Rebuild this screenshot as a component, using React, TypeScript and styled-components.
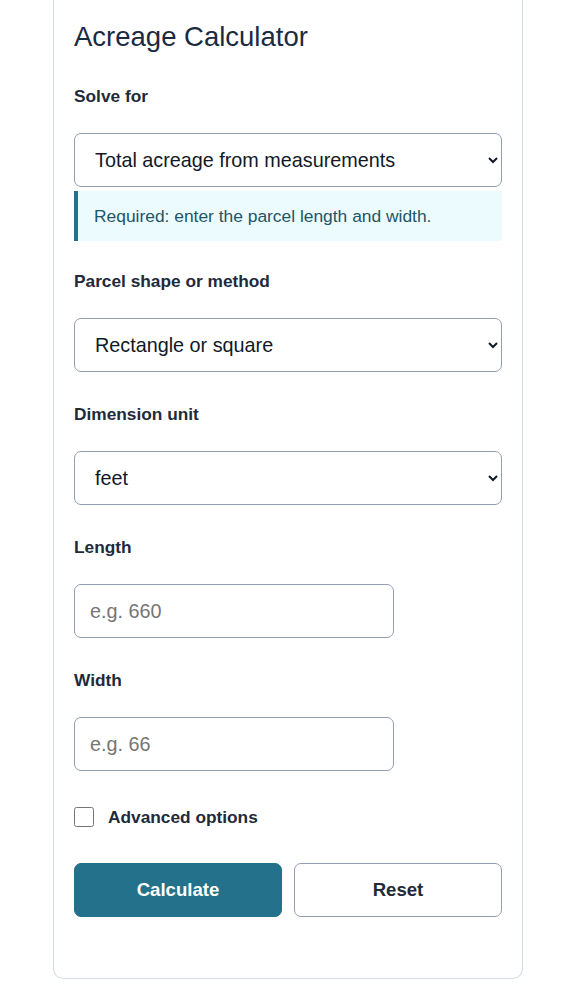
import React, { useState } from "react"
import styled, { createGlobalStyle } from "styled-components"

const GlobalStyle = createGlobalStyle`
    html, body {
        margin: 0;
        padding: 0;
        background: #ffffff;
    }
    body {
        font-family: "Liberation Sans", Arial, sans-serif;
        color: #1e293b;
    }
    * {
        box-sizing: border-box;
    }
`

const Page = styled.div`
    display: flex;
    justify-content: center;
    padding-right: 6px;
`

const Card = styled.form`
    width: 470px;
    border: 1px solid #d5dce5;
    border-top: none;
    border-radius: 0 0 10px 10px;
    padding: 20px 20px 20px;
    background: #ffffff;
`

const Title = styled.h1`
    margin: 0 0 30px;
    font-size: 27.5px;
    font-weight: 400;
    line-height: 1.2;
    color: #1b2a41;
`

const Field = styled.div<{ $gap?: number }>`
    display: flex;
    flex-direction: column;
    margin-bottom: ${({ $gap }) => ($gap ?? 29)}px;
`

const Label = styled.label`
    font-size: 17.3px;
    font-weight: 700;
    line-height: 26px;
    color: #1f2a3a;
    margin-bottom: 24px;
`

const Select = styled.select`
    width: 100%;
    height: 54px;
    padding: 0 12px 0 16px;
    font-family: inherit;
    font-size: 19.8px;
    color: #111827;
    background: #ffffff;
    border: 1px solid #919eb1;
    border-radius: 7px;
`

const TextInput = styled.input`
    width: 320px;
    height: 54px;
    padding: 0 15px;
    font-family: inherit;
    font-size: 19.8px;
    color: #111827;
    background: #ffffff;
    border: 1px solid #919eb1;
    border-radius: 7px;

    &::placeholder {
        color: #757575;
    }
`

const Hint = styled.div`
    margin-top: 4px;
    padding: 12px 16px;
    background: #ecfbfe;
    border-left: 4px solid #24718b;
    font-size: 17.4px;
    line-height: 26px;
    color: #1f5567;
`

/* top margin collapses with the last field's bottom margin */
const CheckRow = styled.label`
    display: flex;
    align-items: center;
    gap: 14px;
    margin: 33px 0 33px;
    font-size: 17.3px;
    font-weight: 700;
    line-height: 26px;
    color: #1f2a3a;
`

const Checkbox = styled.input`
    width: 20px;
    height: 20px;
    margin: 0;
`

const ButtonRow = styled.div`
    display: grid;
    grid-template-columns: 1fr 1fr;
    gap: 12px;
`

const Button = styled.button<{ $primary?: boolean }>`
    height: 54px;
    border-radius: 7px;
    font-family: inherit;
    font-size: 18.6px;
    font-weight: 700;
    cursor: pointer;
    background: ${({ $primary }) => ($primary ? "#24718b" : "#ffffff")};
    color: ${({ $primary }) => ($primary ? "#ffffff" : "#1f2a3a")};
    border: 1px solid ${({ $primary }) => ($primary ? "#24718b" : "#919eb1")};
`

const Result = styled.div`
    height: 41px;
`

export default function App() {
    const [advanced, setAdvanced] = useState(false)

    return (
        <Page>
            <GlobalStyle />
            <Card onSubmit={(e) => e.preventDefault()}>
                <Title>Acreage Calculator</Title>

                <Field $gap={27}>
                    <Label htmlFor="solve">Solve for</Label>
                    <Select id="solve" defaultValue="total">
                        <option value="total">Total acreage from measurements</option>
                        <option value="length">Missing length from acreage</option>
                    </Select>
                    <Hint>Required: enter the parcel length and width.</Hint>
                </Field>

                <Field>
                    <Label htmlFor="shape">Parcel shape or method</Label>
                    <Select id="shape" defaultValue="rect">
                        <option value="rect">Rectangle or square</option>
                        <option value="tri">Triangle</option>
                    </Select>
                </Field>

                <Field>
                    <Label htmlFor="unit">Dimension unit</Label>
                    <Select id="unit" defaultValue="feet">
                        <option value="feet">feet</option>
                        <option value="yards">yards</option>
                        <option value="meters">meters</option>
                    </Select>
                </Field>

                <Field>
                    <Label htmlFor="length">Length</Label>
                    <TextInput id="length" type="text" placeholder="e.g. 660" />
                </Field>

                <Field>
                    <Label htmlFor="width">Width</Label>
                    <TextInput id="width" type="text" placeholder="e.g. 66" />
                </Field>

                <CheckRow>
                    <Checkbox
                        type="checkbox"
                        checked={advanced}
                        onChange={(e) => setAdvanced(e.target.checked)}
                    />
                    Advanced options
                </CheckRow>

                <ButtonRow>
                    <Button type="submit" $primary>
                        Calculate
                    </Button>
                    <Button type="reset">Reset</Button>
                </ButtonRow>

                <Result />
            </Card>
        </Page>
    )
}
